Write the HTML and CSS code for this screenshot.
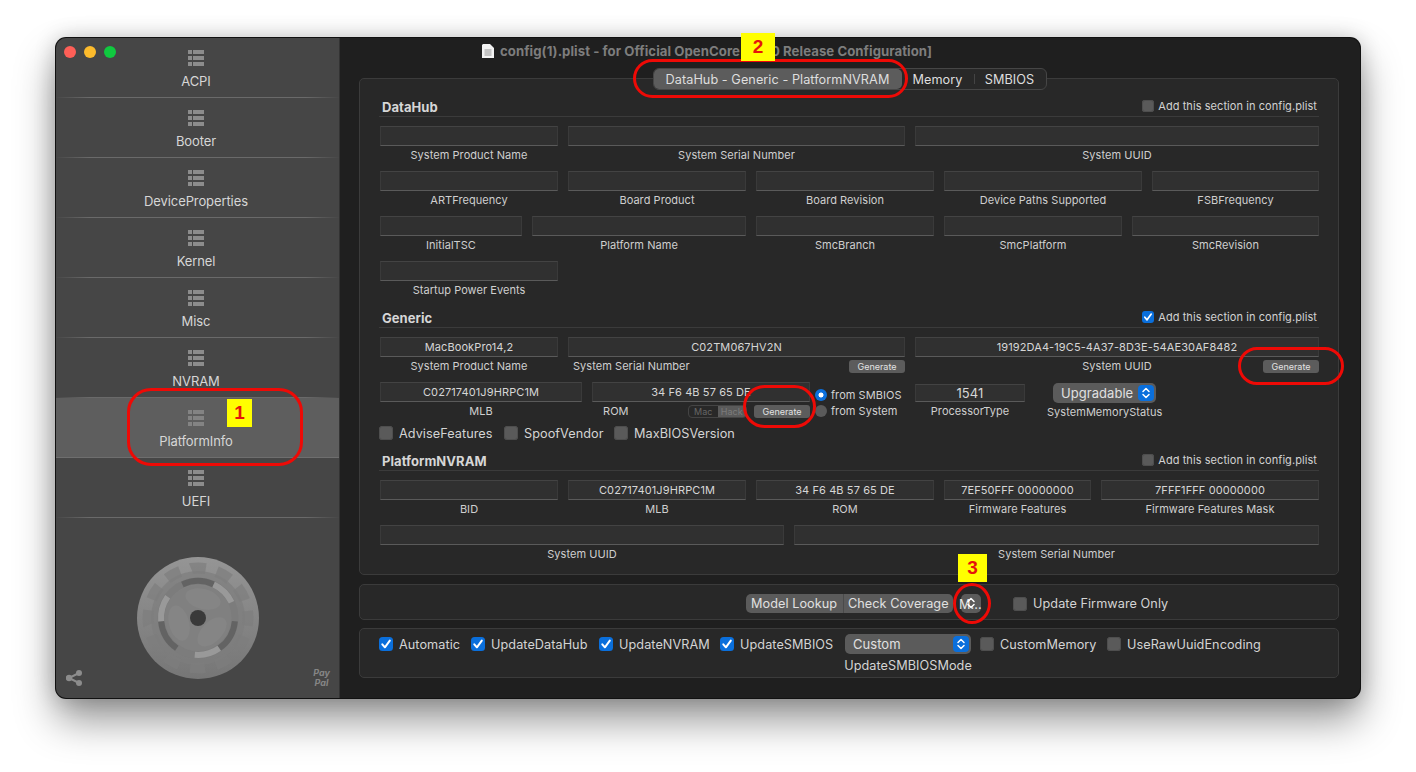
FILE: index.html
```html
<!DOCTYPE html>
<html lang="en">
<head>
<meta charset="utf-8">
<title>config(1).plist</title>
<link rel="stylesheet" href="styles.css">
</head>
<body>
<svg class="defs" width="0" height="0" aria-hidden="true">
  <symbol id="list" viewBox="0 0 16 16"><path d="M0 0h4v4H0zM5 0h11v4H5zM0 6h4v4H0zM5 6h11v4H5zM0 12h4v4H0zM5 12h11v4H5z"/></symbol>
  <symbol id="tick" viewBox="0 0 14 14"><path d="M3.3 7.3l2.6 3L10.8 3.6" fill="none" stroke="#fff" stroke-width="2" stroke-linecap="round" stroke-linejoin="round"/></symbol>
  <symbol id="step" viewBox="0 0 16 16"><path d="M5 6.5L8 3.5l3 3M5 9.5l3 3 3-3" fill="none" stroke="#fff" stroke-width="1.5" stroke-linecap="round" stroke-linejoin="round"/></symbol>
</svg>
<div class="window">
  <aside class="sidebar">
    <div class="lights"><i class="red"></i><i class="amber"></i><i class="green"></i></div>
    <nav class="nav">
      <a class="nav-item"><svg class="nav-icon"><use href="#list"/></svg><span>ACPI</span></a>
      <a class="nav-item"><svg class="nav-icon"><use href="#list"/></svg><span>Booter</span></a>
      <a class="nav-item"><svg class="nav-icon"><use href="#list"/></svg><span>DeviceProperties</span></a>
      <a class="nav-item"><svg class="nav-icon"><use href="#list"/></svg><span>Kernel</span></a>
      <a class="nav-item"><svg class="nav-icon"><use href="#list"/></svg><span>Misc</span></a>
      <a class="nav-item"><svg class="nav-icon"><use href="#list"/></svg><span>NVRAM</span></a>
      <a class="nav-item selected"><svg class="nav-icon"><use href="#list"/></svg><span>PlatformInfo</span></a>
      <a class="nav-item"><svg class="nav-icon"><use href="#list"/></svg><span>UEFI</span></a>
    </nav>
    <div class="side-foot">
      <svg class="share" viewBox="0 0 16 16"><path d="M13 3L3 8l10 5" fill="none" stroke="#8c8c8c" stroke-width="2"/><circle cx="13" cy="3" r="3" fill="#8c8c8c"/><circle cx="3" cy="8" r="3.2" fill="#8c8c8c"/><circle cx="13" cy="13" r="3" fill="#8c8c8c"/></svg>
      <svg class="wheel" viewBox="0 0 124 124">
        <defs>
          <linearGradient id="disc" x1="0" y1="0" x2="0" y2="1"><stop offset="0" stop-color="#959595"/><stop offset="1" stop-color="#767676"/></linearGradient>
        </defs>
        <circle cx="62" cy="62" r="61" fill="url(#disc)"/>
        <circle cx="62" cy="62" r="47" fill="#7e7e7e" fill-opacity=".7"/>
        <circle cx="62" cy="62" r="50" fill="none" stroke="#7e7e7e" stroke-opacity=".7" stroke-width="11" pathLength="360" stroke-dasharray="17 13" transform="rotate(-8 62 62)"/>
        <circle cx="62" cy="62" r="37" fill="none" stroke="#7c7c7c" stroke-width="7"/>
        <circle cx="62" cy="62" r="33" fill="#808080"/>
        <g id="arcs">
          <circle cx="62" cy="62" r="37" fill="none" stroke="#636363" stroke-width="6" pathLength="360" stroke-dasharray="50 310" transform="rotate(-115 62 62)"/>
          <circle cx="62" cy="62" r="37" fill="none" stroke="#999" stroke-width="6" pathLength="360" stroke-dasharray="40 320" transform="rotate(-65 62 62)"/>
          <ellipse cx="67" cy="43" rx="18" ry="10" fill="#858585" transform="rotate(15 67 43)"/>
        </g>
        <use href="#arcs" transform="rotate(120 62 62)"/>
        <use href="#arcs" transform="rotate(240 62 62)"/>
        <circle cx="62" cy="62" r="8" fill="#3a3a3a"/>
      </svg>
      <div class="paypal">Pay<br>Pal</div>
    </div>
  </aside>
  <main class="main">
    <div class="titlebar">
      <svg class="doc" viewBox="0 0 12 14"><path d="M1 0h7l4 4v10H0V1z" fill="#f2f2f2"/><path d="M2.5 5h7v7h-7z" fill="#c4c4c4"/></svg>
      <span class="title">config(1).plist - for Official OpenCore [0.7.0 Release Configuration]</span>
    </div>

    <section class="panel panel-main">
      <div class="tabs">
        <span class="tab tab-a on">DataHub - Generic - PlatformNVRAM</span>
        <span class="tab tab-b">Memory</span>
        <span class="tab tab-c">SMBIOS</span>
      </div>

      <header class="sec-head"><h2>DataHub</h2><label class="sec-check"><span class="cb small"></span>Add this section in config.plist</label></header>
      <div class="row r-a"><div class="cell"><div class="fld"></div><div class="lbl">System Product Name</div></div><div class="cell"><div class="fld"></div><div class="lbl">System Serial Number</div></div><div class="cell"><div class="fld"></div><div class="lbl">System UUID</div></div></div>
      <div class="row r-b"><div class="cell"><div class="fld"></div><div class="lbl">ARTFrequency</div></div><div class="cell"><div class="fld"></div><div class="lbl">Board Product</div></div><div class="cell"><div class="fld"></div><div class="lbl">Board Revision</div></div><div class="cell"><div class="fld"></div><div class="lbl">Device Paths Supported</div></div><div class="cell"><div class="fld"></div><div class="lbl">FSBFrequency</div></div></div>
      <div class="row r-c"><div class="cell"><div class="fld"></div><div class="lbl">InitialTSC</div></div><div class="cell"><div class="fld"></div><div class="lbl">Platform Name</div></div><div class="cell"><div class="fld"></div><div class="lbl">SmcBranch</div></div><div class="cell"><div class="fld"></div><div class="lbl">SmcPlatform</div></div><div class="cell"><div class="fld"></div><div class="lbl">SmcRevision</div></div></div>
      <div class="row r-a"><div class="cell"><div class="fld"></div><div class="lbl">Startup Power Events</div></div></div>

      <header class="sec-head sec-gap"><h2>Generic</h2><label class="sec-check"><span class="cb small on"><svg><use href="#tick"/></svg></span>Add this section in config.plist</label></header>
      <div class="row r-a">
        <div class="cell"><div class="fld">MacBookPro14,2</div><div class="lbl">System Product Name</div></div>
        <div class="cell"><div class="fld">C02TM067HV2N</div><div class="lbl lbl-split"><span>System Serial Number</span><button class="gen">Generate</button></div></div>
        <div class="cell"><div class="fld">19192DA4-19C5-4A37-8D3E-54AE30AF8482</div><div class="lbl lbl-mid"><span>System UUID</span><button class="gen">Generate</button></div></div>
      </div>
      <div class="row row-gen">
        <div class="cell"><div class="fld">C02717401J9HRPC1M</div><div class="lbl">MLB</div></div>
        <div class="cell"><div class="fld">34 F6 4B 57 65 DE</div><div class="lbl lbl-rom"><span>ROM</span><span class="mini-seg"><i>Mac</i><i class="on">Hack</i></span><button class="gen gen-rom">Generate</button></div></div>
        <div class="radios">
          <label class="radio"><span class="dot on"></span>from SMBIOS</label>
          <label class="radio"><span class="dot"></span>from System</label>
        </div>
        <div class="cell"><div class="fld fld-big">1541</div><div class="lbl">ProcessorType</div></div>
        <div class="cell cell-pop"><div class="popup pop-up"><span>Upgradable</span><span class="stepper"><svg><use href="#step"/></svg></span></div><div class="lbl">SystemMemoryStatus</div></div>
      </div>
      <div class="checks checks-gen">
        <label class="chk"><span class="cb"></span>AdviseFeatures</label>
        <label class="chk"><span class="cb"></span>SpoofVendor</label>
        <label class="chk"><span class="cb"></span>MaxBIOSVersion</label>
      </div>

      <header class="sec-head"><h2>PlatformNVRAM</h2><label class="sec-check"><span class="cb small"></span>Add this section in config.plist</label></header>
      <div class="row r-d">
        <div class="cell"><div class="fld"></div><div class="lbl">BID</div></div>
        <div class="cell"><div class="fld">C02717401J9HRPC1M</div><div class="lbl">MLB</div></div>
        <div class="cell"><div class="fld">34 F6 4B 57 65 DE</div><div class="lbl">ROM</div></div>
        <div class="cell"><div class="fld">7EF50FFF 00000000</div><div class="lbl">Firmware Features</div></div>
        <div class="cell"><div class="fld">7FFF1FFF 00000000</div><div class="lbl">Firmware Features Mask</div></div>
      </div>
      <div class="row r-e">
        <div class="cell"><div class="fld"></div><div class="lbl">System UUID</div></div>
        <div class="cell"><div class="fld"></div><div class="lbl">System Serial Number</div></div>
      </div>
    </section>

    <section class="panel panel-lookup">
      <div class="seg"><span>Model Lookup</span><span>Check Coverage</span></div>
      <div class="m-btn">M...<svg><use href="#step"/></svg></div>
      <label class="chk chk-fw"><span class="cb"></span>Update Firmware Only</label>
    </section>

    <section class="panel panel-update">
      <label class="chk"><span class="cb on"><svg><use href="#tick"/></svg></span>Automatic</label>
      <label class="chk"><span class="cb on"><svg><use href="#tick"/></svg></span>UpdateDataHub</label>
      <label class="chk"><span class="cb on"><svg><use href="#tick"/></svg></span>UpdateNVRAM</label>
      <label class="chk"><span class="cb on"><svg><use href="#tick"/></svg></span>UpdateSMBIOS</label>
      <div class="mode"><div class="popup pop-mode"><span>Custom</span><span class="stepper"><svg><use href="#step"/></svg></span></div><div class="mode-lbl">UpdateSMBIOSMode</div></div>
      <label class="chk"><span class="cb"></span>CustomMemory</label>
      <label class="chk"><span class="cb"></span>UseRawUuidEncoding</label>
    </section>
  </main>
</div>

<div class="ring ring-1"></div>
<div class="ring ring-2"></div>
<div class="ring ring-3"></div>
<div class="ring ring-4"></div>
<div class="ring ring-5"></div>
<div class="tag tag-1">1</div>
<div class="tag tag-2">2</div>
<div class="tag tag-3">3</div>
</body>
</html>
```

FILE: styles.css
```css
* { box-sizing: border-box; }
html, body { margin: 0; height: 772px; overflow: hidden; }
body {
  position: relative;
  padding: 38px 56px 0;
  background: #fff;
  font-family: Inter, "Noto Sans", "Liberation Sans", sans-serif;
  font-size: 11px;
  letter-spacing: .05px;
  color: #d2d2d2;
}
.defs { position: absolute; }
svg { display: block; }

.window {
  display: flex;
  width: 1304px;
  height: 660px;
  border-radius: 10px;
  overflow: hidden;
  background: #1f1f1f;
  box-shadow: 0 0 0 1px #111, 0 22px 40px rgba(0,0,0,.42), 0 0 22px rgba(0,0,0,.2);
}

/* Sidebar */
.sidebar {
  position: relative;
  display: flex;
  flex-direction: column;
  flex: 0 0 284px;
  background: #464646;
  border-right: 1px solid #333;
}
.lights { position: absolute; left: 8px; top: 8px; display: flex; gap: 8px; z-index: 1; }
.lights i { width: 12px; height: 12px; border-radius: 50%; }
.lights .red { background: #fe5f57; }
.lights .amber { background: #fdbb2c; }
.lights .green { background: #10c93f; }

.nav { display: flex; flex-direction: column; }
.nav-item {
  display: flex;
  flex-direction: column;
  align-items: center;
  height: 60px;
  padding: 12px 3px 0 0;
  font-size: 13px;
  letter-spacing: -.1px;
  line-height: 16px;
  color: #d6d6d6;
  border-bottom: 1px solid;
  border-image: linear-gradient(90deg, #464646, #6a6a6a 12%, #6a6a6a 88%, #464646) 1;
}
.nav-item.selected { background: #5e5e5e; border-image: none; border-bottom-color: #6e6e6e; }
.nav-icon { width: 16px; height: 16px; margin-bottom: 7px; fill: #8c8c8c; }
.selected .nav-icon { fill: #838383; }

.side-foot {
  flex: 1;
  display: grid;
  grid-template-columns: 1fr 124px 1fr;
  align-items: end;
  padding: 0 9px 11px 10px;
}
.share { width: 16px; height: 16px; margin-bottom: 1px; }
.wheel { width: 124px; height: 124px; margin-bottom: 7px; border-radius: 50%; justify-self: center; }
.paypal {
  justify-self: end;
  margin-bottom: -1px;
  font-size: 9px;
  line-height: 10px;
  font-weight: 700;
  font-style: italic;
  text-align: center;
  color: #858585;
}

/* Main */
.main { flex: 1; padding: 0 20px 0 19px; }
.titlebar {
  display: flex;
  align-items: center;
  height: 40px;
  padding: 0 0 14px 123px;
  color: #7d7d7d;
  font-size: 13.2px;
  font-weight: 700;
}
.doc { width: 12px; height: 14px; margin-right: 6px; }
.title { white-space: nowrap; }

.panel { width: 980px; background: #282828; border: 1px solid #3b3b3b; border-radius: 5px; }
.panel-main { height: 497px; padding: 0 19px 0 20px; }

.tabs {
  display: flex;
  width: 394px;
  height: 22px;
  margin: -11px auto 8px;
  border: 1px solid #464646;
  border-radius: 6px;
  background: #282828;
  font-size: 12.7px;
  color: #dedede;
}
.tab { display: flex; align-items: center; justify-content: center; white-space: nowrap; }
.tab.on { background: #5c5c5c; border-radius: 5px; }
.tab-a { width: 248px; }
.tab-b { width: 72px; }
.tab-c { position: relative; width: 72px; }
.tab-c::before { content: ""; position: absolute; left: 0; top: 5px; bottom: 5px; width: 1px; background: #444; }

.sec-head {
  display: flex;
  justify-content: space-between;
  align-items: center;
  height: 19px;
  margin: 0 0 9px -1px;
  padding: 0 2px 0 3px;
  border-bottom: 1px solid #3b3b3b;
}
.sec-gap { margin-top: 3px; }
.sec-head h2 { margin: 0; font-size: 13px; font-weight: 700; color: #d6d6d6; }
.sec-check { display: flex; align-items: center; gap: 4px; margin-bottom: 3px; font-size: 11px; letter-spacing: .07px; }

.row { display: grid; column-gap: 10px; height: 45px; align-items: start; }
.r-a { grid-template-columns: 178px 337px 404px; }
.r-b { grid-template-columns: 178px 178px 178px 198px 167px; }
.r-c { grid-template-columns: 142px 214px 178px 178px 187px; }
.r-d { grid-template-columns: 178px 178px 178px 147px 218px; }
.r-e { grid-template-columns: 404px 525px; }
.row-gen {
  grid-template-columns: 202px 218px 85px 110px 127px;
  height: 42px;
}
.row-gen .radios { margin-left: -5px; }
.cell-pop { margin-left: 12px; }

.fld {
  display: flex;
  align-items: center;
  justify-content: center;
  height: 20px;
  padding-bottom: 1px;
  background: #303030;
  border: 1px solid #3a3a3a;
  border-bottom-color: #5a5a5a;
  border-top-color: #434343;
  white-space: nowrap;
  letter-spacing: .1px;
  color: #d6d6d6;
}
.fld-big { height: 18px; margin-top: 2px; font-size: 13px; }
.lbl { height: 19px; line-height: 19px; text-align: center; white-space: nowrap; color: #cfcfcf; }

.gen {
  width: 56px;
  height: 13px;
  padding: 0;
  border: 0;
  border-radius: 3px;
  background: #5c5c5c;
  color: #e2e2e2;
  font: 9px/13px Inter, "Liberation Sans", sans-serif;
}
.lbl-split { display: flex; justify-content: space-between; align-items: center; padding-left: 5px; }
.lbl-mid { display: grid; grid-template-columns: 1fr auto 1fr; align-items: center; }
.lbl-mid .gen { grid-column: 3; justify-self: end; }
.lbl-mid span { grid-column: 2; }
.lbl-rom { display: flex; align-items: center; padding-left: 11px; }
.lbl-rom > span:first-child { width: 85px; text-align: left; }
.mini-seg {
  display: flex;
  width: 59px;
  height: 13px;
  border: 1px solid #444;
  border-radius: 4px;
  overflow: hidden;
  font-size: 9px;
  line-height: 11px;
  color: #666;
}
.mini-seg i { flex: 1; font-style: normal; text-align: center; }
.mini-seg i.on { background: #5a5a5a; color: #7c7c7c; }
.gen-rom { margin-left: 7px; }

.radios { padding-top: 5px; }
.radio { display: flex; align-items: center; gap: 4px; height: 16px; font-size: 11px; white-space: nowrap; }
.dot { width: 12px; height: 12px; border-radius: 50%; background: #5a5a5a; }
.dot.on { background: radial-gradient(circle, #fff 0 2.2px, #0a6fdc 2.8px); }

.popup {
  display: flex;
  align-items: center;
  justify-content: space-between;
  height: 20px;
  border-radius: 5px;
  background: #5b5b5b;
  color: #e0e0e0;
  font-size: 13px;
}
.pop-up { width: 103px; margin: 1px 0 0 6px; padding: 0 2px 0 8px; }
.pop-mode { width: 126px; margin-left: 1px; padding: 0 2px 0 8px; }
.stepper { width: 16px; height: 16px; border-radius: 4px; background: #0a6fdc; }
.stepper svg { width: 16px; height: 16px; }

.cb { flex: none; display: block; width: 14px; height: 14px; border-radius: 3.5px; background: #5a5a5a; box-shadow: inset 0 0 0 1px #4e4e4e; }
.cb.small { width: 12px; height: 12px; border-radius: 3px; }
.cb.on { background: #0a6fdc; box-shadow: none; }
.cb svg { width: 100%; height: 100%; }

.chk { display: flex; align-items: center; gap: 6px; height: 20px; font-size: 12.7px; white-space: nowrap; color: #d4d4d4; }
.checks { display: grid; }
.checks-gen { grid-template-columns: 125px 110px auto; height: 18px; margin-bottom: 10px; margin-left: -1px; }
.checks-gen .chk { height: 18px; }

/* Lookup */
.panel-lookup {
  display: flex;
  align-items: center;
  height: 36px;
  margin-top: 9px;
  padding: 3px 0 0 386px;
}
.seg {
  display: flex;
  width: 207px;
  height: 19px;
  border-radius: 5px;
  background: #5b5b5b;
  font-size: 12.7px;
  line-height: 19px;
  color: #e0e0e0;
  white-space: nowrap;
}
.seg span:first-child { width: 97px; padding-left: 5px; box-shadow: 1px 0 0 0 #4a4a4a; }
.seg span:last-child { padding-left: 5px; }
.m-btn {
  position: relative;
  width: 20px;
  height: 19px;
  margin-left: 8px;
  border-radius: 5px;
  background: #5b5b5b;
  font-size: 12.7px;
  line-height: 22px;
  color: #e6e6e6;
  white-space: nowrap;
  text-indent: -2px;
}
.m-btn svg { position: absolute; left: 2px; top: 1px; width: 16px; height: 16px; }
.chk-fw { margin-left: 32px; }

/* Update row */
.panel-update {
  display: grid;
  grid-template-columns: 92px 128px 121px 125px 135px 127px auto;
  align-items: start;
  height: 50px;
  margin-top: 8px;
  padding: 5px 0 0 19px;
}
.mode { width: 128px; margin-left: -1px; }
.mode-lbl { height: 24px; line-height: 24px; text-align: center; font-size: 12.7px; white-space: nowrap; color: #d4d4d4; }

/* Annotations */
.ring { position: absolute; border: 3px solid #ee0a06; }
.ring-1 { left: 127px; top: 388px; width: 176px; height: 78px; border-radius: 24px; }
.ring-2 { left: 633px; top: 59px; width: 275px; height: 39px; border-radius: 20px; }
.ring-3 { left: 743px; top: 385px; width: 73px; height: 43px; border-radius: 22px; }
.ring-4 { left: 1238px; top: 347px; width: 106px; height: 38px; border-radius: 20px; }
.ring-5 { left: 953px; top: 583px; width: 38px; height: 41px; border-radius: 50%; }
.tag {
  position: absolute;
  background: #ffff00;
  color: #e5140c;
  font: 700 19px/28px "Liberation Sans", sans-serif;
  text-align: center;
}
.tag-1 { left: 227px; top: 399px; width: 25px; height: 28px; }
.tag-2 { left: 741px; top: 33px; width: 34px; height: 28px; }
.tag-3 { left: 958px; top: 554px; width: 29px; height: 28px; }
```
